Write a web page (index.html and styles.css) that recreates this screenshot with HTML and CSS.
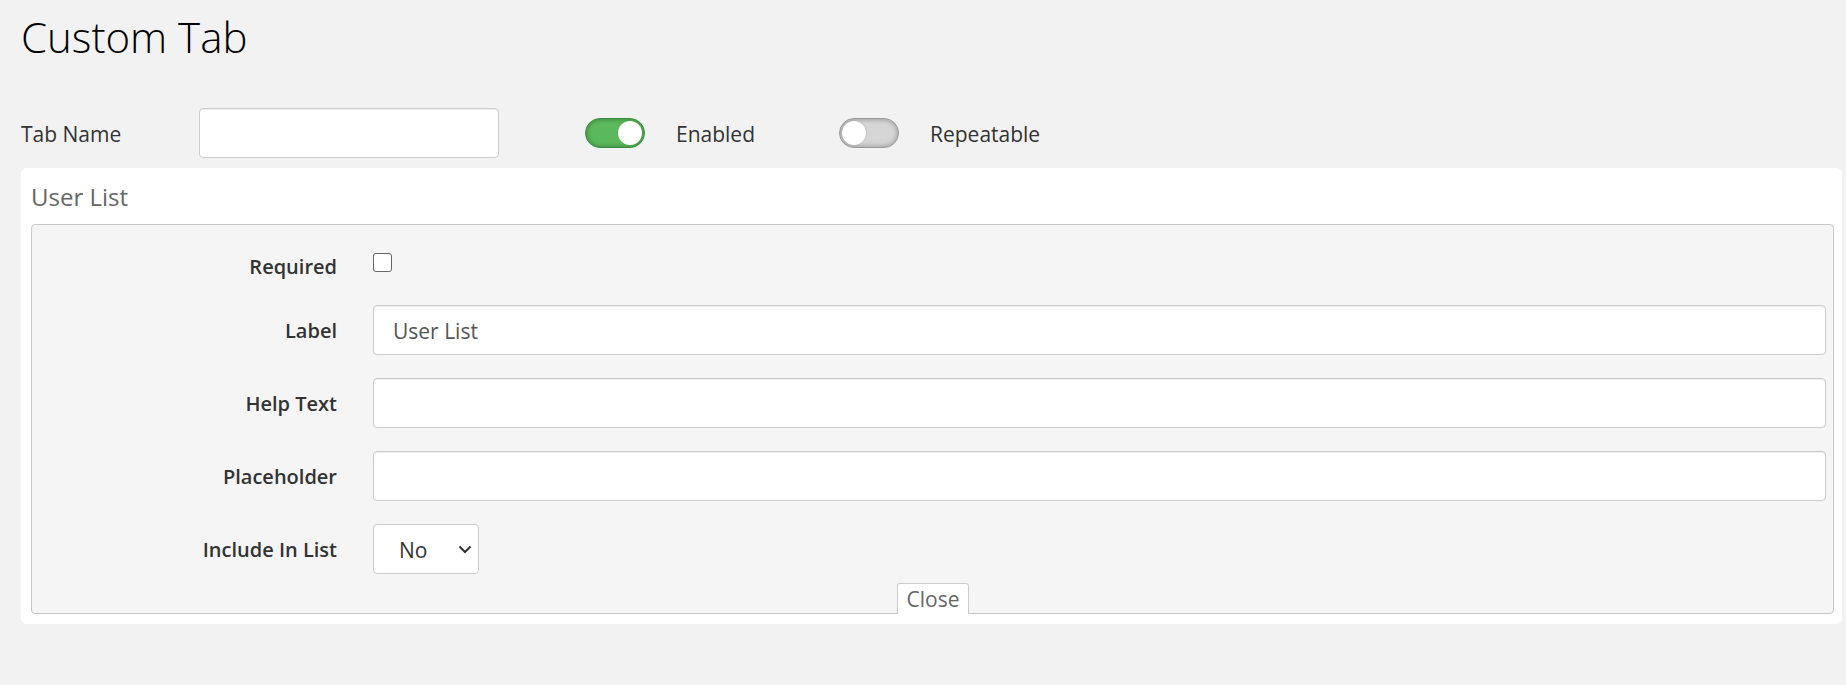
FILE: index.html
```html
<!DOCTYPE html>
<html lang="en">
<head>
<meta charset="utf-8">
<title>Custom Tab</title>
<link rel="stylesheet" href="styles.css">
</head>
<body>
<div class="page">
  <h1 class="title">Custom Tab</h1>
  <div class="tab-row">
    <label class="tab-label">Tab Name</label>
    <input class="text-input tab-input" type="text">
    <span class="toggle on"><span class="knob"></span></span>
    <span class="toggle-label enabled-label">Enabled</span>
    <span class="toggle off"><span class="knob"></span></span>
    <span class="toggle-label">Repeatable</span>
  </div>
  <section class="card">
    <h2 class="card-title">User List</h2>
    <div class="panel">
      <div class="form-row check-row">
        <div class="field-label">Required</div>
        <div class="field-control"><input type="checkbox" class="check"></div>
      </div>
      <div class="form-row">
        <div class="field-label">Label</div>
        <div class="field-control"><input class="text-input" type="text" value="User List"></div>
      </div>
      <div class="form-row">
        <div class="field-label">Help Text</div>
        <div class="field-control"><input class="text-input" type="text"></div>
      </div>
      <div class="form-row">
        <div class="field-label">Placeholder</div>
        <div class="field-control"><input class="text-input" type="text"></div>
      </div>
      <div class="form-row last-row">
        <div class="field-label">Include In List</div>
        <div class="field-control">
          <span class="select-box">
            <select class="select"><option>No</option><option>Yes</option></select>
            <svg class="chevron" width="14" height="9" viewBox="0 0 14 9"><path d="M1.5 1.5 L7 7 L12.5 1.5" fill="none" stroke="#333" stroke-width="2"/></svg>
          </span>
        </div>
      </div>
      <div class="close-row"><span class="close-tab">Close</span></div>
    </div>
  </section>
</div>
</body>
</html>
```
FILE: styles.css
```css
body {
  margin: 0;
  background: #f2f2f2;
  font-family: "Open Sans", "Liberation Sans", sans-serif;
  color: #333;
}
.page {
  padding: 14px 4px 0 21px;
}
.title {
  margin: 0;
  font-size: 42px;
  font-weight: 300;
  line-height: 46px;
  color: #000;
}
.tab-row {
  display: flex;
  align-items: center;
  height: 50px;
  margin-top: 48px;
}
.tab-label {
  width: 178px;
  flex: none;
  font-size: 21px;
  color: #333;
  padding-top: 1px;
}
.text-input {
  width: 100%;
  height: 50px;
  box-sizing: border-box;
  border: 1px solid #ccc;
  border-radius: 4px;
  background: #fff;
  box-shadow: inset 0 1px 1px rgba(0,0,0,.075);
  font-family: "Open Sans", "Liberation Sans", sans-serif;
  font-size: 21px;
  color: #555;
  padding: 1px 19px 0;
  outline: none;
}
.tab-input {
  width: 300px;
  flex: none;
}
.toggle {
  width: 60px;
  height: 30px;
  box-sizing: border-box;
  border-radius: 15px;
  border: 1px solid;
  display: flex;
  align-items: center;
  padding: 0 2px;
  flex: none;
}
.toggle.on {
  margin-left: 86px;
  background: #5cb85c;
  border-color: #3a8a3d;
  box-shadow: inset 0 0 4px 1px rgba(30,90,30,.45);
  justify-content: flex-end;
}
.toggle.off {
  background: #d5d5d5;
  border-color: #999;
  box-shadow: inset 0 0 4px 1px rgba(0,0,0,.25);
}
.knob {
  width: 24px;
  height: 24px;
  border-radius: 50%;
  background: #fff;
}
.toggle.off .knob {
  box-shadow: 0 0 2px rgba(0,0,0,.2);
}
.toggle-label {
  margin-left: 31px;
  font-size: 21px;
  color: #333;
  padding-top: 1px;
}
.enabled-label {
  width: 163px;
  flex: none;
}
.card {
  margin-top: 10px;
  background: #fff;
  border-radius: 6px;
  padding: 0 8px 10px 6px;
}
.card-title {
  margin: 0;
  font-size: 24px;
  font-weight: 400;
  line-height: 28px;
  color: #666;
  padding: 15px 0 13px 4px;
}
.panel {
  margin-left: 4px;
  background: #f5f5f5;
  border: 1px solid #c8c8c8;
  border-radius: 4px;
  padding: 16px 7px 0 0;
}
.form-row {
  display: flex;
  align-items: center;
  min-height: 50px;
  margin-bottom: 23px;
}
.form-row.check-row {
  align-items: flex-start;
  margin-bottom: 13px;
}
.form-row.last-row {
  margin-bottom: 9px;
}
.field-label {
  width: 305px;
  flex: none;
  text-align: right;
  font-size: 20px;
  font-weight: 600;
  color: #333;
  padding-top: 1px;
}
.check-row .field-label {
  height: 50px;
  line-height: 50px;
}
.field-control {
  margin-left: 36px;
  flex: 1;
}
.check {
  appearance: none;
  -webkit-appearance: none;
  display: block;
  width: 19px;
  height: 19px;
  margin: 12px 0 0;
  box-sizing: border-box;
  border: 1px solid #666;
  border-radius: 3px;
  background: #fff;
}
.select-box {
  position: relative;
  display: inline-block;
  width: 106px;
  height: 50px;
  vertical-align: top;
}
.select {
  appearance: none;
  -webkit-appearance: none;
  width: 100%;
  height: 100%;
  box-sizing: border-box;
  border: 1px solid #ccc;
  border-radius: 4px;
  background: #fff;
  padding: 1px 0 0 25px;
  font-family: "Open Sans", "Liberation Sans", sans-serif;
  font-size: 21px;
  color: #333;
  outline: none;
}
.chevron {
  position: absolute;
  right: 7px;
  top: 21px;
  pointer-events: none;
}
.close-row {
  display: flex;
  justify-content: center;
  margin-bottom: -1px;
}
.close-tab {
  position: relative;
  margin-left: 8px;
  height: 31px;
  box-sizing: border-box;
  padding: 1px 9px 0;
  border: 1px solid #ccc;
  border-bottom: none;
  border-radius: 3px 3px 0 0;
  background: #fff;
  font-size: 21px;
  line-height: 28px;
  color: #666;
}
```
